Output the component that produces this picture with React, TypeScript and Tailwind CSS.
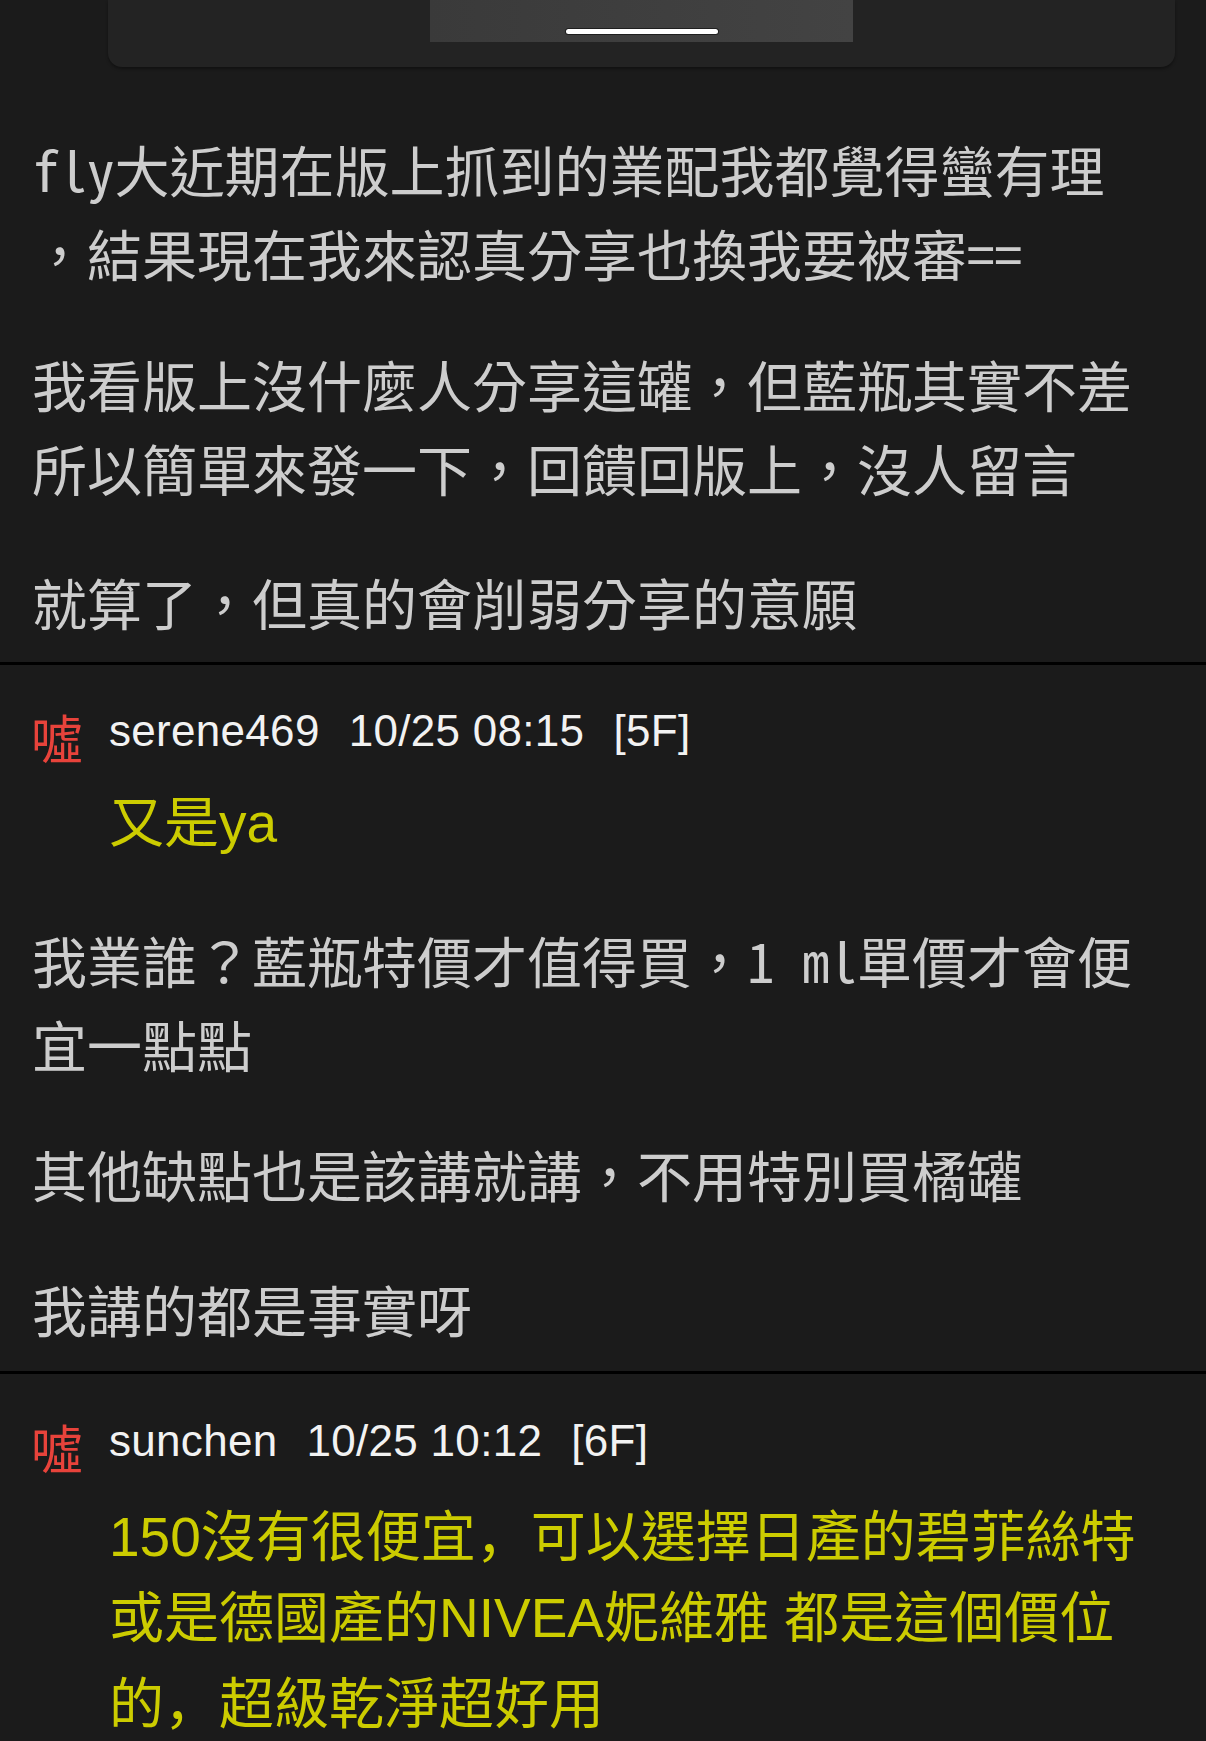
import React from "react";

const BODY =
  "font-['Noto_Sans_Mono_CJK_TC','Noto_Sans_CJK_TC',monospace] font-light text-[55px] leading-[84px] text-[#cdcdcd] whitespace-nowrap";
const YELLOW =
  "font-['Liberation_Sans','Noto_Sans_CJK_TC',sans-serif] text-[55px] leading-[81px] text-[#cccc00] whitespace-nowrap";

function Comma() {
  return <span className="font-['Noto_Sans_CJK_JP',sans-serif]">，</span>;
}

function Header({ user, time, floor }: { user: string; time: string; floor: string }) {
  return (
    <div className="flex h-[60px] items-center pl-[31px]">
      <span className="w-[78px] translate-y-[6px] font-['Noto_Sans_CJK_TC',sans-serif] text-[52px] leading-none text-[#e8433b]">
        噓
      </span>
      <div className="flex items-center gap-[29px] font-['Liberation_Sans',sans-serif] text-[44px] leading-none tracking-[0.3px] text-[#f2f2f2]">
        <span>{user}</span>
        <span>{time}</span>
        <span>{floor}</span>
      </div>
    </div>
  );
}

export default function App() {
  return (
    <div className="min-h-screen w-full overflow-hidden bg-[#1b1b1b]">
      {/* quoted image card */}
      <div className="ml-[108px] mr-[31px] flex h-[67px] justify-center rounded-b-[14px] bg-[#232323] shadow-[0_2px_3px_rgba(0,0,0,0.35)]">
        <div className="flex h-[42px] w-[423px] items-end justify-center bg-gradient-to-r from-[#3a3a3a] to-[#434343] pb-[8px]">
          <div className="h-[5px] w-[152px] rounded-full bg-white ring-1 ring-black/50" />
        </div>
      </div>

      {/* post body */}
      <div className="pl-[32px] pt-[59px] pb-[19px]">
        <div className={BODY}>
          <div>fly大近期在版上抓到的業配我都覺得蠻有理</div>
          <div>，結果現在我來認真分享也換我要被審==</div>
        </div>
        <div className={`${BODY} mt-[47px]`}>
          <div>我看版上沒什麼人分享這罐，但藍瓶其實不差</div>
          <div>所以簡單來發一下，回饋回版上，沒人留言</div>
        </div>
        <div className={`${BODY} mt-[50px]`}>
          <div>就算了，但真的會削弱分享的意願</div>
        </div>
      </div>

      <div className="h-[3px] bg-black" />

      {/* comment 5F */}
      <div className="pt-[36px] pb-[21px]">
        <Header user="serene469" time="10/25 08:15" floor="[5F]" />
        <div className={`${YELLOW} mt-[22px] pl-[109px]`}>又是ya</div>
        <div className="pl-[32px]">
          <div className={`${BODY} mt-[53px]`}>
            <div>我業誰？藍瓶特價才值得買，1 ml單價才會便</div>
            <div>宜一點點</div>
          </div>
          <div className={`${BODY} mt-[46px]`}>
            <div>其他缺點也是該講就講，不用特別買橘罐</div>
          </div>
          <div className={`${BODY} mt-[51px]`}>
            <div>我講的都是事實呀</div>
          </div>
        </div>
      </div>

      <div className="h-[3px] bg-black" />

      {/* comment 6F */}
      <div className="pt-[37px]">
        <Header user="sunchen" time="10/25 10:12" floor="[6F]" />
        <div className={`${YELLOW} mt-[21px] pl-[109px]`}>
          <div>
            150沒有很便宜<Comma />可以選擇日產的碧菲絲特
          </div>
          <div>或是德國產的NIVEA妮維雅 都是這個價位</div>
          <div>
            的<Comma />超級乾淨超好用
          </div>
        </div>
      </div>
    </div>
  );
}
